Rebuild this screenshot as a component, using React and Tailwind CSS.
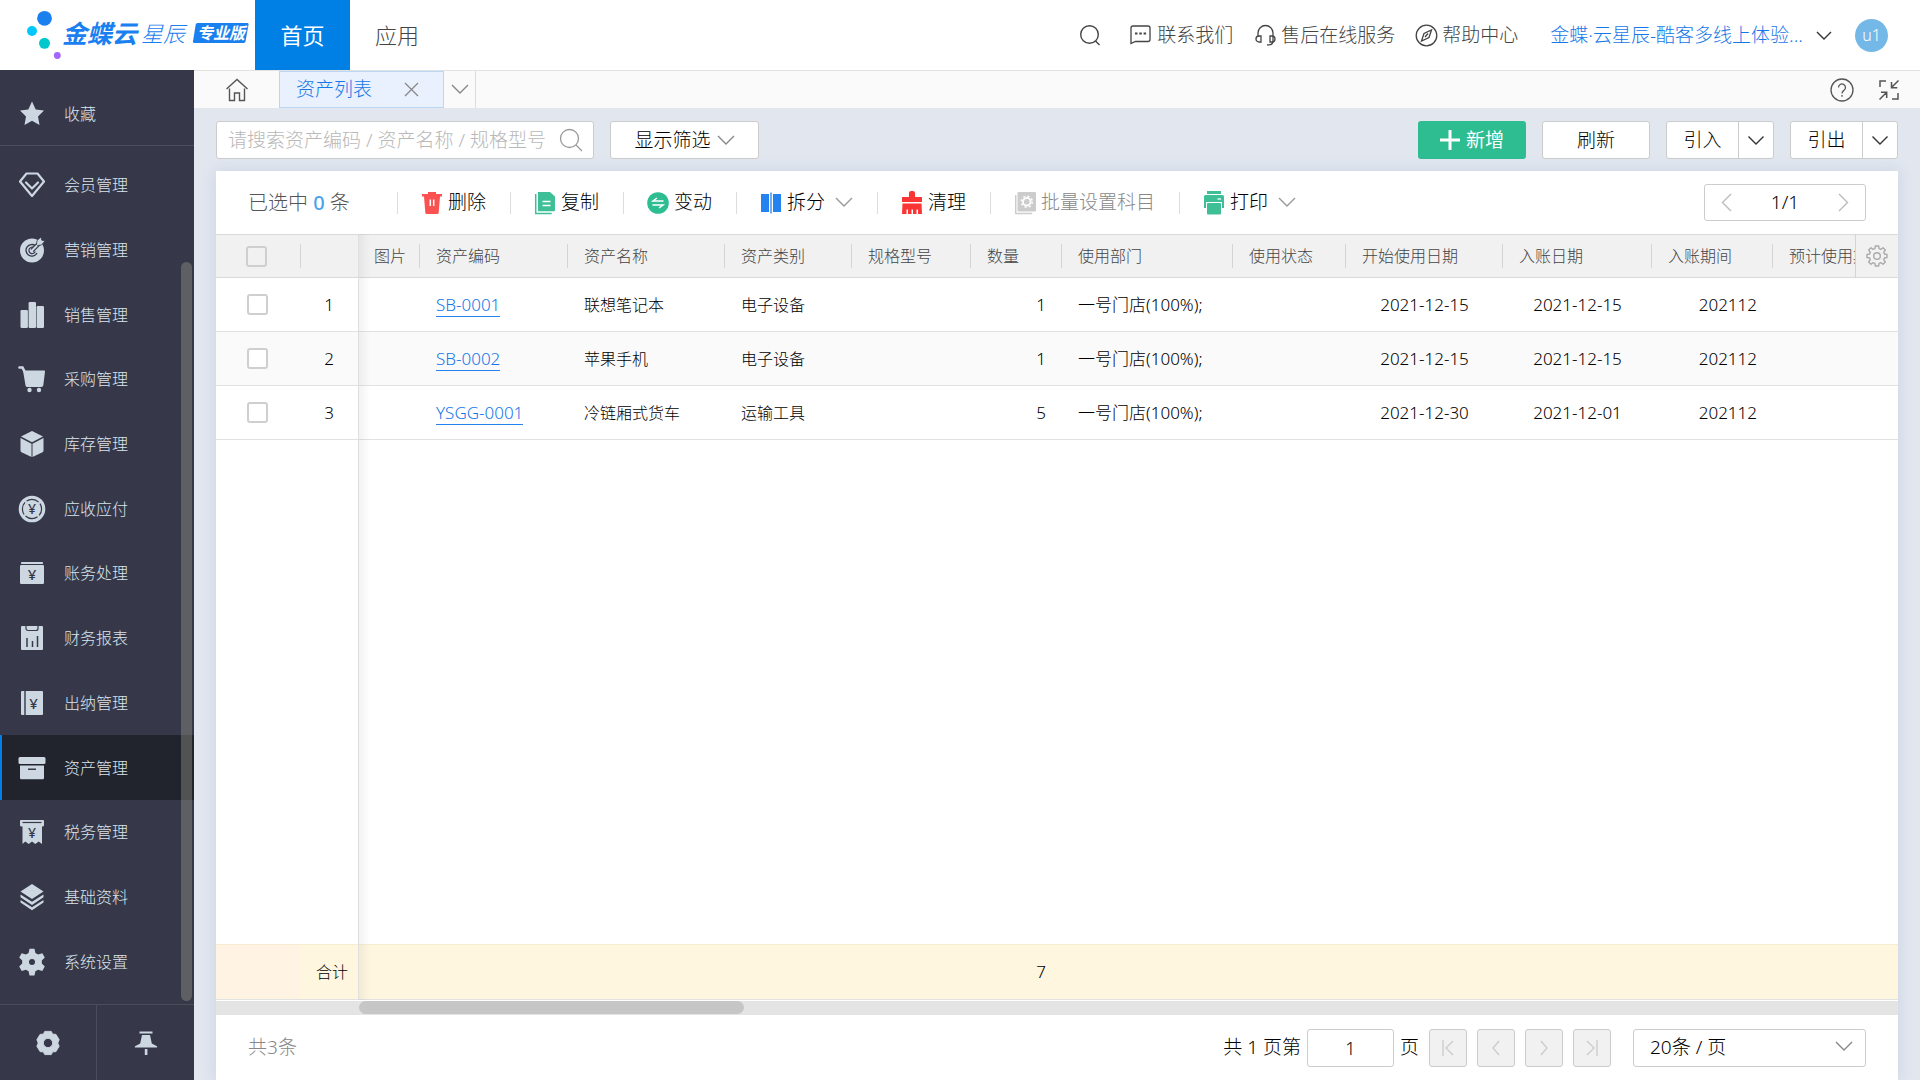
import { useState } from 'react'

const Chevron = ({ className = '', d = 'M1 1l8 8 8-8' }) => (
  <svg className={className} width="18" height="11" viewBox="0 0 18 11" fill="none" stroke="currentColor" strokeWidth="1.4">
    <path d={d} />
  </svg>
)

const Yen = ({ x = 14, y = 19, size = 15 }) => (
  <text x={x} y={y} fontSize={size} fontWeight="500" textAnchor="middle" fill="#363849">¥</text>
)

const dark = '#363849'

const menuIcons = {
  star: <path d="M14 1.5l3.7 7.9 8.3 1.1-6 5.9 1.5 8.6-7.5-4.2L6.500 25 8 16.400 2 10.500l8.300-1.100z" />,
  member: (
    <g fill="none" stroke="currentColor" strokeWidth="2.2" strokeLinejoin="round" strokeLinecap="round">
      <path d="M8.500 2.500h11l6.500 8L14 25 2 10.500z" />
      <path d="M8 11.500l6 6 6-6" />
    </g>
  ),
  target: (
    <>
      <circle cx="14" cy="14.500" r="12" />
      <path d="M17.500 9.800A5.800 5.800 0 1 0 19 17" fill="none" stroke={dark} strokeWidth="1.300" />
      <path d="M16 11.800a3.200 3.200 0 1 0 1.200 3.500" fill="none" stroke={dark} strokeWidth="1.200" />
      <path d="M14 14.500l9-9" stroke={dark} strokeWidth="4.500" />
      <path d="M13.500 15l8-8" stroke="currentColor" strokeWidth="2" />
      <path d="M18.500 8.500l.5-4L23 1l.8 3.200 3.200.8-3.500 4-4 .5z" stroke={dark} strokeWidth=".8" />
    </>
  ),
  bars: (
    <>
      <rect x="2.500" y="9" width="7.400" height="18" rx="1.200" />
      <rect x="10.600" y="1" width="7.400" height="26" rx="1.200" />
      <rect x="18.600" y="5" width="7.400" height="22" rx="1.200" />
    </>
  ),
  cart: (
    <>
      <path d="M1.500 2.500h3l2 4" fill="none" stroke="currentColor" strokeWidth="2.600" strokeLinecap="round" />
      <path d="M5 5.500H26a1 1 0 0 1 1 1.200l-1.700 13.500a2 2 0 0 1-2 1.800H9.500a2 2 0 0 1-2-1.600z" />
      <circle cx="11.500" cy="25" r="2.200" />
      <circle cx="21" cy="25" r="2.200" />
    </>
  ),
  box: (
    <>
      <path d="M14 1l11 5.500-11 5.700L3 6.500z" />
      <path d="M2.500 8l11 5.700V27l-10-4.700a2 2 0 0 1-1-1.700z" />
      <path d="M25.500 8l-11 5.700V27l10-4.700a2 2 0 0 0 1-1.700z" />
    </>
  ),
  coin: (
    <>
      <circle cx="14" cy="14" r="13.300" />
      <circle cx="14" cy="14" r="9.600" fill="none" stroke={dark} strokeWidth="1.200" strokeDasharray="13 2.080" strokeDashoffset="6" />
      <Yen y={19} size={14} />
    </>
  ),
  ledger: (
    <>
      <rect x="3" y="3" width="22" height="2" rx=".8" />
      <rect x="2" y="6" width="24" height="19" rx="1.200" />
      <Yen y={21} />
    </>
  ),
  report: (
    <>
      <rect x="3" y="2" width="22" height="24" rx="1" />
      <path d="M8 2v2.500a2 2 0 0 0 2 2h8a2 2 0 0 0 2-2V2" fill="none" stroke={dark} strokeWidth="1.200" />
      <path d="M9 14v9M14.500 17v6M19.500 12v11" stroke={dark} strokeWidth="1.500" />
    </>
  ),
  cashier: (
    <>
      <rect x="3" y="2" width="22" height="24" rx="1" />
      <path d="M7 2v24" stroke={dark} strokeWidth="1.400" />
      <Yen x={15.500} y={20} />
    </>
  ),
  asset: (
    <>
      <rect x=".5" y="3" width="27" height="7" rx="1.500" />
      <path d="M2 11.500h24V24a1.200 1.200 0 0 1-1.200 1.200H3.200A1.200 1.200 0 0 1 2 24z" />
      <path d="M10 15.200h8" stroke="#21232d" strokeWidth="1.300" />
    </>
  ),
  tax: (
    <>
      <path d="M3 2h22a1 1 0 0 1 1 1v4a1.500 1.500 0 0 1-1.500 1.500h-.5V26l-3.300-2.500L17.300 26 14 23.500 10.700 26l-3.400-2.500L4.500 26V8.500h-1A1.500 1.500 0 0 1 2 7V3a1 1 0 0 1 1-1z" />
      <path d="M4.500 4.500h19" stroke={dark} strokeWidth="1.200" />
      <Yen y={20} size={14} />
    </>
  ),
  layers: (
    <>
      <path d="M14 1l11.500 7.500L14 16 2.500 8.500z" />
      <path d="M2.500 11.500L14 18.700l11.500-7.200v2.800L14 22 2.500 14.300z" />
      <path d="M2.500 17L14 24.300 25.500 17v2.500L14 27.200 2.500 19.500z" />
    </>
  ),
  gear: (
    <path fillRule="evenodd" d="M11.500.8h5l.9 4.200 2.700 1.500 4.200-1.200 2.500 4.300-3 3v3l3 3-2.500 4.300-4.200-1.200-2.700 1.500-.9 4.200h-5l-.9-4.200-2.700-1.500-4.200 1.200-2.500-4.300 3-3v-3l-3-3 2.500-4.300 4.200 1.200L10.600 5zM14 11a3 3 0 1 0 0 6 3 3 0 0 0 0-6z" />
  ),
}

const MenuIcon = ({ name }) => (
  <svg width="28" height="28" viewBox="0 0 28 28" fill="currentColor" className="shrink-0 text-[#cdd7e1]">
    {menuIcons[name]}
  </svg>
)

const menu = [
  ['member', '会员管理'],
  ['target', '营销管理'],
  ['bars', '销售管理'],
  ['cart', '采购管理'],
  ['box', '库存管理'],
  ['coin', '应收应付'],
  ['ledger', '账务处理'],
  ['report', '财务报表'],
  ['cashier', '出纳管理'],
  ['asset', '资产管理'],
  ['tax', '税务管理'],
  ['layers', '基础资料'],
  ['gear', '系统设置'],
]

const columns = [
  '图片', '资产编码', '资产名称', '资产类别', '规格型号', '数量',
  '使用部门', '使用状态', '开始使用日期', '入账日期', '入账期间', '预计使用期间',
]

const assets = [
  { code: 'SB-0001', name: '联想笔记本', type: '电子设备', qty: 1, dept: '一号门店(100%);', start: '2021-12-15', booked: '2021-12-15', period: '202112' },
  { code: 'SB-0002', name: '苹果手机', type: '电子设备', qty: 1, dept: '一号门店(100%);', start: '2021-12-15', booked: '2021-12-15', period: '202112' },
  { code: 'YSGG-0001', name: '冷链厢式货车', type: '运输工具', qty: 5, dept: '一号门店(100%);', start: '2021-12-30', booked: '2021-12-01', period: '202112' },
]

const Columns = () => (
  <colgroup>
    <col className="w-[84px]" />
    <col className="w-[58px]" />
    <col className="w-[62px]" />
    <col className="w-[148px]" />
    <col className="w-[157px]" />
    <col className="w-[127px]" />
    <col className="w-[119px]" />
    <col className="w-[91px]" />
    <col className="w-[171px]" />
    <col className="w-[113px]" />
    <col className="w-[157px]" />
    <col className="w-[149px]" />
    <col className="w-[121px]" />
    <col />
    <col className="w-[43px]" />
  </colgroup>
)

function Logo() {
  return (
    <a href="#" className="relative flex h-full w-[255px] shrink-0 items-center pb-1 pl-[62px] text-[#1a80f0]">
      <svg className="absolute left-6 top-2" width="40" height="54" viewBox="0 0 40 54">
        <circle cx="20.500" cy="10.300" r="7.400" fill="#1a80f0" />
        <circle cx="8" cy="23" r="5" fill="#00c8ff" />
        <circle cx="20.500" cy="35.300" r="5.500" fill="#00c9cd" />
        <circle cx="33.300" cy="47.500" r="3.400" fill="#a366ff" />
      </svg>
      <span className="text-[25px] font-bold italic leading-8">金蝶云</span>
      <span className="ml-1 text-[22px] font-light italic leading-8">星辰</span>
      <span className="relative ml-2 flex h-5 w-[56px] items-center justify-center">
        <svg className="absolute inset-0" width="56" height="20" viewBox="0 0 56 20">
          <path d="M4.500 0H54a1.500 1.500 0 0 1 1.500 1.800l-3 16.700A2 2 0 0 1 50.500 20H1.500A1.500 1.500 0 0 1 0 18.300L2.700 1.500A2 2 0 0 1 4.500 0z" fill="#1a80f0" />
        </svg>
        <span className="relative text-base font-bold italic leading-5 text-white">专业版</span>
      </span>
    </a>
  )
}

function Header() {
  return (
    <header className="flex h-[70px] shrink-0 items-center bg-white text-[19px] text-[#444]">
      <Logo />
      <nav className="flex h-full text-[22px]">
        <a href="#" className="flex h-full w-[95px] items-center justify-center bg-[#0080e5] font-normal text-white">首页</a>
        <a href="#" className="flex h-full w-[94px] items-center justify-center">应用</a>
      </nav>
      <div className="ml-auto flex items-center pr-8">
        <button aria-label="搜索" className="mr-[29px]">
          <svg width="22" height="22" viewBox="0 0 22 22" fill="none" stroke="currentColor" strokeWidth="1.400">
            <circle cx="10.500" cy="10.500" r="8.800" />
            <path d="M16.500 17l4 4" />
          </svg>
        </button>
        <a href="#" className="mr-[22px] flex items-center gap-[6px]">
          <svg width="21" height="20" viewBox="0 0 21 20" fill="none" stroke="currentColor" strokeWidth="1.300">
            <path d="M1 18.500V3a2 2 0 0 1 2-2h15a2 2 0 0 1 2 2v11.500a2 2 0 0 1-2 2H5.500z" />
            <path d="M5 8.500h2.500M9.300 8.500h2.500M13.600 8.500h2.500" strokeWidth="2" />
          </svg>
          联系我们
        </a>
        <a href="#" className="mr-[20px] flex items-center gap-[5px]">
          <svg width="21" height="22" viewBox="0 0 21 22" fill="none" stroke="currentColor" strokeWidth="1.300">
            <path d="M3 13V9a7.500 7.500 0 0 1 15 0v8c0 2.500-1.500 3.800-4 3.800h-2" />
            <path d="M6 12v6H4a3 3 0 0 1 0-6zM15 12v6h2a3 3 0 0 0 0-6z" />
          </svg>
          售后在线服务
        </a>
        <a href="#" className="mr-8 flex items-center gap-1">
          <svg width="23" height="23" viewBox="0 0 23 23" fill="none" stroke="currentColor" strokeWidth="1.300">
            <circle cx="11.500" cy="11.500" r="10.300" />
            <path d="M16.500 6l-2.500 7.500L6.500 17 9 9.500z" />
            <path d="M10 13l3-3.500" />
          </svg>
          帮助中心
        </a>
        <button className="flex items-center gap-3 text-[#1677e8]">
          金蝶·云星辰-酷客多线上体验...
          <Chevron className="text-[#333]" d="M2 2l7 7 7-7" />
        </button>
        <span className="ml-[22px] flex size-[33px] items-center justify-center rounded-full bg-[#74b8e8] text-base text-white">u1</span>
      </div>
    </header>
  )
}

function Sidebar() {
  return (
    <aside className="relative flex w-[194px] shrink-0 flex-col bg-[#363849] text-base text-[#dbe4ec]">
      <a href="#" className="flex h-[76px] shrink-0 items-center gap-[18px] border-b border-[#4b4d5c] pl-[18px] pt-3">
        <MenuIcon name="star" />
        收藏
      </a>
      <nav className="flex flex-1 flex-col pb-[10px] pt-[7px]">
        {menu.map(([icon, label]) => (
          <a
            key={label}
            href="#"
            className={`flex flex-1 items-center gap-[18px] border-l-[2px] pl-4 ${
              icon === 'asset' ? 'border-[#0080e5] bg-[#21232d]' : 'border-transparent'
            }`}
          >
            <MenuIcon name={icon} />
            {label}
          </a>
        ))}
      </nav>
      <div className="flex h-[76px] shrink-0 border-t border-[#4b4d5c] text-[#cdd7e1]">
        <button aria-label="设置" className="flex w-[97px] items-center justify-center border-r border-[#4b4d5c]">
          <svg width="26" height="26" viewBox="0 0 28 28" fill="currentColor">
            <path fillRule="evenodd" d="M10.500 1.500h7l1.500 3 3.500.2 3.500 5.800-1.500 3.500 1.500 3.500-3.500 5.800-3.500.2-1.500 3h-7l-1.500-3-3.500-.2L2 17.500 3.500 14 2 10.500l3.500-5.800 3.500-.2zM14 9a5 5 0 1 0 0 10 5 5 0 0 0 0-10z" stroke="currentColor" strokeLinejoin="round" />
          </svg>
        </button>
        <button aria-label="固定" className="flex flex-1 items-center justify-center">
          <svg width="24" height="26" viewBox="0 0 24 26" fill="currentColor">
            <path d="M5.500 1.500h13v2h-13zM8 5h8l1.800 8.500 4.700 2.500a1 1 0 0 1 .5 1.500H1a1 1 0 0 1 .5-1.500l4.700-2.500zM10.800 19h2.600v6h-2.600z" />
          </svg>
        </button>
      </div>
      <span className="absolute bottom-[79px] right-[2px] top-[192px] w-[11px] rounded-full bg-[#9b9b8c]/40" />
    </aside>
  )
}

function TabBar() {
  return (
    <div className="flex h-[38px] shrink-0 items-center border-t border-[#e2e2e2] bg-[#fafafa] text-[19px] text-[#555]">
      <button aria-label="主页" className="flex h-full w-[85px] items-center justify-center">
        <svg width="24" height="24" viewBox="0 0 24 24" fill="none" stroke="currentColor" strokeWidth="1.400">
          <path d="M1.500 11L12 1.500 22.500 11M4.500 10.500v12h5V15h5v7.500h5v-12" />
        </svg>
      </button>
      <div className="flex h-full w-[165px] items-center justify-between border border-[#b9d7f5] bg-[#e8f1fd] pl-4 pr-6 text-[#1677e8]">
        资产列表
        <button aria-label="关闭" className="text-[#888]">
          <svg width="15" height="15" viewBox="0 0 15 15" stroke="currentColor" strokeWidth="1.300">
            <path d="M1 1l13 13M14 1L1 14" />
          </svg>
        </button>
      </div>
      <button aria-label="更多页签" className="flex h-full w-8 items-center justify-center border-r border-[#ddd] text-[#888]">
        <Chevron />
      </button>
      <div className="ml-auto flex items-center gap-6 pr-5">
        <button aria-label="帮助">
          <svg width="24" height="24" viewBox="0 0 24 24" fill="none" stroke="currentColor" strokeWidth="1.300">
            <circle cx="12" cy="12" r="11" />
            <path d="M8.500 9.500a3.500 3.500 0 1 1 5.500 2.800c-1.300 1-2 1.500-2 3.200M12 17v1.800" />
          </svg>
        </button>
        <button aria-label="退出全屏">
          <svg width="22" height="22" viewBox="0 0 22 22" fill="none" stroke="currentColor" strokeWidth="1.500">
            <path d="M2 8V2h6M20 14v6h-6M20.500 1.500L13.500 8.500M13.500 3v5.800h5.800M1.500 20.500l7-7M3 13.300h5.700V19" />
          </svg>
        </button>
      </div>
    </div>
  )
}

function SplitButton({ label }) {
  return (
    <div className="flex h-[38px] w-[108px] rounded-[3px] border border-[#ccc] bg-white">
      <button className="flex-1 border-r border-[#ccc]">{label}</button>
      <button aria-label={`${label}选项`} className="flex w-[34px] items-center justify-center text-[#333]">
        <Chevron d="M1.500 1.500l7.500 7.500 7.500-7.500" />
      </button>
    </div>
  )
}

function QueryBar() {
  return (
    <div className="flex items-center gap-4 px-[22px] pb-3 pt-[13px] text-[19px] text-black">
      <label className="flex h-[38px] w-[378px] items-center rounded-[3px] border border-[#ccc] bg-white pl-[11px] pr-[10px]">
        <input
          aria-label="搜索资产"
          placeholder="请搜索资产编码 / 资产名称 / 规格型号"
          className="min-w-0 flex-1 outline-none placeholder:text-[#b8b8b8]"
        />
        <svg width="24" height="24" viewBox="0 0 24 24" fill="none" stroke="#999" strokeWidth="1.300">
          <circle cx="10.500" cy="10.500" r="9" />
          <path d="M17 17l6 6" />
        </svg>
      </label>
      <button className="flex h-[38px] w-[149px] items-center justify-center gap-[6px] rounded-[3px] border border-[#ccc] bg-white">
        显示筛选
        <Chevron className="text-[#888]" />
      </button>
      <div className="ml-auto flex gap-4">
        <button className="flex h-[38px] w-[108px] items-center justify-center gap-[6px] rounded-[3px] bg-[#2dbd91] font-normal text-white">
          <svg width="20" height="20" viewBox="0 0 20 20" stroke="currentColor" strokeWidth="3">
            <path d="M10 0v20M0 10h20" />
          </svg>
          新增
        </button>
        <button className="h-[38px] w-[108px] rounded-[3px] border border-[#ccc] bg-white">刷新</button>
        <SplitButton label="引入" />
        <SplitButton label="引出" />
      </div>
    </div>
  )
}

const actions = [
  {
    label: '删除',
    icon: (
      <>
        <path d="M6 1h8v2h6v2.500h-2l-1.300 16a1.500 1.500 0 0 1-1.500 1.500H4.800a1.500 1.500 0 0 1-1.500-1.500L2 5.500H0V3h6z" fill="#fc5151" />
        <path d="M8.300 8.500v6.500M11.700 8.500v6.500" stroke="#fff" strokeWidth="1.500" />
      </>
    ),
  },
  {
    label: '复制',
    icon: (
      <>
        <path d="M.7 3v19.500h16" stroke="#3ebf96" strokeWidth="1.500" fill="none" />
        <path d="M3 1h12l5 4.500V19a1.200 1.200 0 0 1-1.200 1.200H3z" fill="#3ebf96" />
        <path d="M7.500 10.500h8M7.500 14.500h8" stroke="#fff" strokeWidth="1.500" />
      </>
    ),
  },
  {
    label: '变动',
    icon: (
      <>
        <circle cx="10" cy="12" r="10.800" fill="#2dbd91" />
        <path d="M15.500 10H5l4-3M4.500 14H15l-4 3" stroke="#fff" strokeWidth="1.500" fill="none" />
      </>
    ),
  },
  {
    label: '拆分',
    menu: true,
    icon: (
      <>
        <path d="M0 3h8v18H0zM12 3h8v18h-8z" fill="#2483ee" />
        <path d="M10 1.500v21" stroke="#2483ee" strokeWidth="1.300" />
      </>
    ),
  },
  {
    label: '清理',
    icon: (
      <>
        <path d="M7 1.500a2 2 0 0 1 2-1.500h2a2 2 0 0 1 2 1.500V6h7v5H0V6h7z" fill="#fb3434" />
        <path d="M.5 12.500h19L20 23h-4v-4.500h-1.500V23H11v-4.500H9.500V23H6v-4.500H4.500V23H0z" fill="#fb3434" />
      </>
    ),
  },
  {
    label: '批量设置科目',
    disabled: true,
    icon: (
      <>
        <path d="M.7 4v18.500h16.500" stroke="#ccc" strokeWidth="1.500" fill="none" />
        <rect x="2.500" y="1" width="18.500" height="19.500" rx="1.200" fill="#ccc" />
        <circle cx="11.800" cy="10.700" r="3.800" stroke="#fff" strokeWidth="1.800" fill="none" />
        <circle cx="11.800" cy="10.700" r="5.500" stroke="#fff" strokeWidth="1.500" strokeDasharray="2 2.320" fill="none" />
      </>
    ),
  },
  {
    label: '打印',
    menu: true,
    icon: (
      <>
        <path d="M3 0h14v3H3zM0 5.500A1.500 1.500 0 0 1 1.500 4h17A1.500 1.500 0 0 1 20 5.500V17H0z" fill="#3ebf96" />
        <rect x="2" y="11" width="16" height="13" fill="#fff" />
        <rect x="3" y="12" width="14" height="11.500" rx="1" fill="#3ebf96" />
        <path d="M13.500 8h3.500" stroke="#fff" strokeWidth="1.300" />
      </>
    ),
  },
]

function ActionBar({ count }) {
  return (
    <div className="flex h-[63px] shrink-0 items-center pr-8 text-[19px] text-black">
      <p className="w-[181px] pl-8 text-xl text-[#555]">
        已选中 <span className="font-medium text-[#4aa3ea]">{count}</span> 条
      </p>
      {actions.map((action) => (
        <div key={action.label} className="flex h-[22px] items-center border-l border-[#ddd] px-6">
          <button disabled={action.disabled} className="flex items-center gap-[6px] disabled:text-[#888]">
            <svg width="20" height="24" viewBox="0 0 20 24" className="overflow-visible">{action.icon}</svg>
            {action.label}
            {action.menu && <Chevron className="ml-1 text-[#999]" />}
          </button>
        </div>
      ))}
      <div className="ml-auto flex h-[37px] w-[162px] items-center justify-between rounded-[3px] border border-[#ccc] px-4">
        <button aria-label="上一条" className="text-[#bbb]">
          <svg width="11" height="19" viewBox="0 0 11 19" fill="none" stroke="currentColor" strokeWidth="1.400"><path d="M10 1L1.500 9.500 10 18" /></svg>
        </button>
        <span>1/1</span>
        <button aria-label="下一条" className="text-[#bbb]">
          <svg width="11" height="19" viewBox="0 0 11 19" fill="none" stroke="currentColor" strokeWidth="1.400"><path d="M1 1l8.500 8.500L1 18" /></svg>
        </button>
      </div>
    </div>
  )
}

const checkboxClass =
  'block size-[21px] appearance-none rounded-[3px] border-2 border-[#cfcfcf] checked:border-[#2483ee] checked:bg-[#2483ee]'

function AssetTable({ selected, setSelected }) {
  const toggle = (code) =>
    setSelected(selected.includes(code) ? selected.filter((c) => c !== code) : [...selected, code])

  return (
    <div className="relative flex flex-1 flex-col text-[17px] text-black">
      <table className="w-full table-fixed border-collapse">
        <Columns />
        <thead className="bg-[#f1f1f1] text-base text-[#444]">
          <tr className="h-[43px] border-y border-[#dadada]">
            <th className="p-0 pl-[30px]">
              <input
                type="checkbox"
                aria-label="全选"
                className={checkboxClass}
                checked={selected.length === assets.length}
                onChange={(e) => setSelected(e.target.checked ? assets.map((a) => a.code) : [])}
              />
            </th>
            <th className="p-0">
              <div className="h-6 border-l border-[#d4d4d4]" />
            </th>
            {columns.map((name, i) => (
              <th key={name} className="overflow-hidden p-0 text-left font-light">
                <div className={`h-6 whitespace-nowrap pl-4 leading-6 ${i < columns.length - 1 ? 'border-r border-[#d4d4d4]' : ''}`}>
                  {name}
                </div>
              </th>
            ))}
            <th className="border-l border-[#d4d4d4] bg-[#f1f1f1] p-0">
              <button aria-label="列设置" className="mx-auto block text-[#aaa]">
                <svg width="22" height="22" viewBox="0 0 22 22" fill="none" stroke="currentColor" strokeWidth="1.400" strokeLinejoin="round">
                  <path d="M9.400 1h3.200l.5 2.700 1.700.7L17.100 2.800l2.200 2.200-1.600 2.300.7 1.700 2.600.5v3l-2.600.5-.7 1.700 1.600 2.300-2.200 2.200-2.300-1.600-1.700.7-.5 2.700H9.400l-.5-2.700-1.700-.7-2.300 1.600L2.700 17l1.600-2.300-.7-1.700L1 12.500v-3L3.600 9l.7-1.700L2.700 5l2.200-2.200 2.300 1.600 1.700-.7z" />
                  <circle cx="11" cy="11" r="3.300" />
                </svg>
              </button>
            </th>
          </tr>
        </thead>
        <tbody>
          {assets.map((asset, i) => (
            <tr key={asset.code} className="h-[54px] border-b border-[#e2e2e2] even:bg-[#fafafa]">
              <td className="p-0 pl-[31px]">
                <input
                  type="checkbox"
                  aria-label={`选择 ${asset.code}`}
                  className={`${checkboxClass} bg-white`}
                  checked={selected.includes(asset.code)}
                  onChange={() => toggle(asset.code)}
                />
              </td>
              <td className="p-0 text-center">{i + 1}</td>
              <td />
              <td className="p-0 pl-4">
                <a href="#" className="border-b border-[#2483ee] text-[#1677e8]">{asset.code}</a>
              </td>
              <td className="p-0 pl-4 text-base">{asset.name}</td>
              <td className="p-0 pl-4 text-base">{asset.type}</td>
              <td />
              <td className="p-0 pr-4 text-right">{asset.qty}</td>
              <td className="p-0 pl-4">{asset.dept}</td>
              <td />
              <td className="p-0 text-center">{asset.start}</td>
              <td className="p-0 text-center">{asset.booked}</td>
              <td className="p-0 pr-4 text-right">{asset.period}</td>
              <td />
              <td />
            </tr>
          ))}
        </tbody>
      </table>
      <table className="mt-auto w-full table-fixed border-collapse">
        <Columns />
        <tbody>
          <tr className="h-[55px] border-b border-t border-b-[#e2e2e2] border-t-[#f8ecd0] bg-[#fef6df]">
            <td className="bg-[#fff4e4]" />
            <td className="p-0 pr-[10px] text-right text-base">合计</td>
            <td colSpan={5} />
            <td className="p-0 pr-4 text-right">{assets.reduce((sum, a) => sum + a.qty, 0)}</td>
            <td colSpan={7} />
          </tr>
        </tbody>
      </table>
      <div className="pointer-events-none absolute inset-y-0 left-[142px] w-3 border-l border-[#dfdfdf] bg-linear-to-r from-black/5 to-transparent" />
    </div>
  )
}

const PageButton = ({ label, d }) => (
  <button disabled aria-label={label} className="flex size-[38px] items-center justify-center rounded-[3px] border border-[#ccc] bg-[#f1f1f1] text-[#ccc]">
    <svg width="14" height="18" viewBox="0 0 14 18" fill="none" stroke="currentColor" strokeWidth="1.400"><path d={d} /></svg>
  </button>
)

function Pagination() {
  const [page, setPage] = useState('1')

  return (
    <div className="flex h-[65px] shrink-0 items-center px-8 text-[19px] text-black">
      <span className="text-[#888]">共{assets.length}条</span>
      <div className="ml-auto flex items-center gap-[6px]">
        <label htmlFor="page">共 1 页第</label>
        <input
          id="page"
          value={page}
          onChange={(e) => setPage(e.target.value)}
          className="h-[38px] w-[87px] rounded-[3px] border border-[#ccc] text-center text-lg"
        />
        <span>页</span>
      </div>
      <div className="ml-[10px] flex gap-[10px]">
        <PageButton label="首页" d="M2 1v16M12 2L5 9l7 7" />
        <PageButton label="上一页" d="M10 2L4 9l6 7" />
        <PageButton label="下一页" d="M4 2l6 7-6 7" />
        <PageButton label="末页" d="M12 1v16M2 2l7 7-7 7" />
      </div>
      <div className="relative ml-[22px] w-[233px]">
        <select aria-label="每页条数" className="h-[38px] w-full appearance-none rounded-[3px] border border-[#ccc] bg-white pl-4">
          <option>20条 / 页</option>
          <option>50条 / 页</option>
        </select>
        <Chevron className="pointer-events-none absolute right-[13px] top-3 text-[#888]" />
      </div>
    </div>
  )
}

export default function App() {
  const [selected, setSelected] = useState([])

  return (
    <div className="flex h-screen flex-col overflow-hidden bg-[#e1e6ef] font-['Noto_Sans','Noto_Sans_CJK_SC',sans-serif] font-light">
      <Header />
      <div className="flex min-h-0 flex-1">
        <Sidebar />
        <main className="flex min-w-0 flex-1 flex-col">
          <TabBar />
          <QueryBar />
          <section className="mx-[22px] flex min-h-0 flex-1 flex-col bg-white shadow-[0_0_14px_rgba(120,140,180,0.2)]">
            <ActionBar count={selected.length} />
            <AssetTable selected={selected} setSelected={setSelected} />
            <div className="mt-px h-[14px] shrink-0 bg-[#e4e4e4] pl-[143px]">
              <div className="h-[13px] w-1/4 rounded-full bg-[#c6c6c6]" />
            </div>
            <Pagination />
          </section>
        </main>
      </div>
    </div>
  )
}
